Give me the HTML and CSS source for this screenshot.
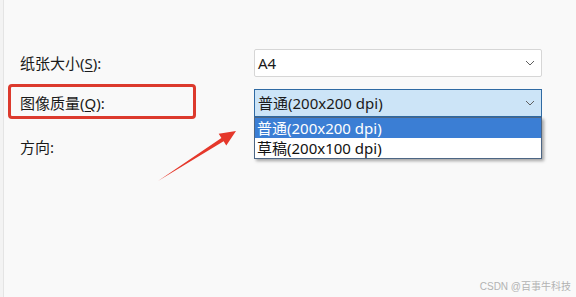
FILE: index.html
```html
<!DOCTYPE html>
<html lang="zh-CN">
<head>
  <meta charset="UTF-8">
  <title>打印设置</title>
  <link rel="stylesheet" href="styles.css">
</head>
<body>

<div class="edge"></div>

<div class="panel">
  <div class="form-grid">
    <div class="field-label">纸张大小(<u>S</u>):</div>
    <div class="select-box">
      <span class="select-text">A4</span>
      <svg class="chevron" width="10" height="6" viewBox="0 0 10 6"><path d="M1 1 L5 5 L9 1" fill="none" stroke="#606060" stroke-width="1"/></svg>
    </div>

    <div class="field-label">图像质量(<u>Q</u>):</div>
    <div class="select-box active">
      <span class="select-text">普通(200x200 dpi)</span>
      <svg class="chevron" width="10" height="6" viewBox="0 0 10 6"><path d="M1 1 L5 5 L9 1" fill="none" stroke="#606060" stroke-width="1"/></svg>
      <div class="dropdown-list">
        <div class="dropdown-item selected">普通(200x200 dpi)</div>
        <div class="dropdown-item">草稿(200x100 dpi)</div>
      </div>
    </div>

    <div class="field-label shifted">方向:</div>
    <div class="select-box shifted"></div>
  </div>
</div>

<!-- annotations drawn on top of the screenshot -->
<div class="highlight-box"></div>
<svg class="pointer-arrow" width="576" height="297" viewBox="0 0 576 297">
  <polygon points="158,181 221.4,137.9 218.7,133.7 236,131 226.3,145.5 223.6,141.3" fill="#e5382b"/>
</svg>

<div class="watermark">CSDN @百事牛科技</div>

</body>
</html>
```

FILE: styles.css
```css
* { margin: 0; padding: 0; box-sizing: border-box; }
body {
  font-family: 'Noto Sans', 'Noto Sans CJK SC', sans-serif;
  width: 576px;
  height: 297px;
  overflow: hidden;
  display: flex;
  background-color: #f9f9f9;
  color: #1a1a1a;
  position: relative;
}
.edge {
  width: 4px;
  background-color: #f3f3f3;
  border-right: 1px solid #e4e4e4;
}
.panel {
  flex: 1;
  padding: 49px 0 0 16px;
}
.form-grid {
  display: grid;
  grid-template-columns: 234px 288px;
  grid-auto-rows: 28px;
  row-gap: 12px;
  align-items: center;
}
.field-label {
  font-size: 15px;
  line-height: 20px;
}
.field-label u {
  text-underline-offset: 2px;
}
.field-label.shifted {
  margin-top: 8px;
}
.select-box {
  height: 28px;
  background-color: #fff;
  border: 1px solid #d6d6d6;
  border-radius: 2px;
  display: flex;
  align-items: center;
  justify-content: space-between;
  padding: 0 6px 0 3px;
  font-size: 15px;
  position: relative;
}
.select-box.shifted {
  margin-top: 4px;
}
.select-box.active {
  background-color: #cce4f7;
  border-color: #2f6aa3;
  border-radius: 0;
}
.select-text {
  line-height: 20px;
}
.chevron {
  display: block;
}
.dropdown-list {
  position: absolute;
  top: 27px;
  left: -1px;
  width: 288px;
  background-color: #fff;
  border: 1px solid #4d6684;
  box-shadow: 2px 2px 3px rgba(0, 0, 0, .35);
  z-index: 2;
}
.dropdown-item {
  height: 20px;
  line-height: 20px;
  padding-left: 2px;
  font-size: 15px;
  color: #111;
}
.dropdown-item.selected {
  background-color: #3b7ed4;
  color: #fff;
}
.highlight-box {
  position: absolute;
  left: 8px;
  top: 84px;
  width: 188px;
  height: 35px;
  border: 3px solid #dc3a2d;
  border-radius: 4px;
}
.pointer-arrow {
  position: absolute;
  left: 0;
  top: 0;
  z-index: 3;
}
.watermark {
  position: absolute;
  right: 5px;
  bottom: 4px;
  font-size: 10px;
  color: #b3b3b3;
  font-family: 'Liberation Sans', 'Noto Sans CJK SC', sans-serif;
}
```
